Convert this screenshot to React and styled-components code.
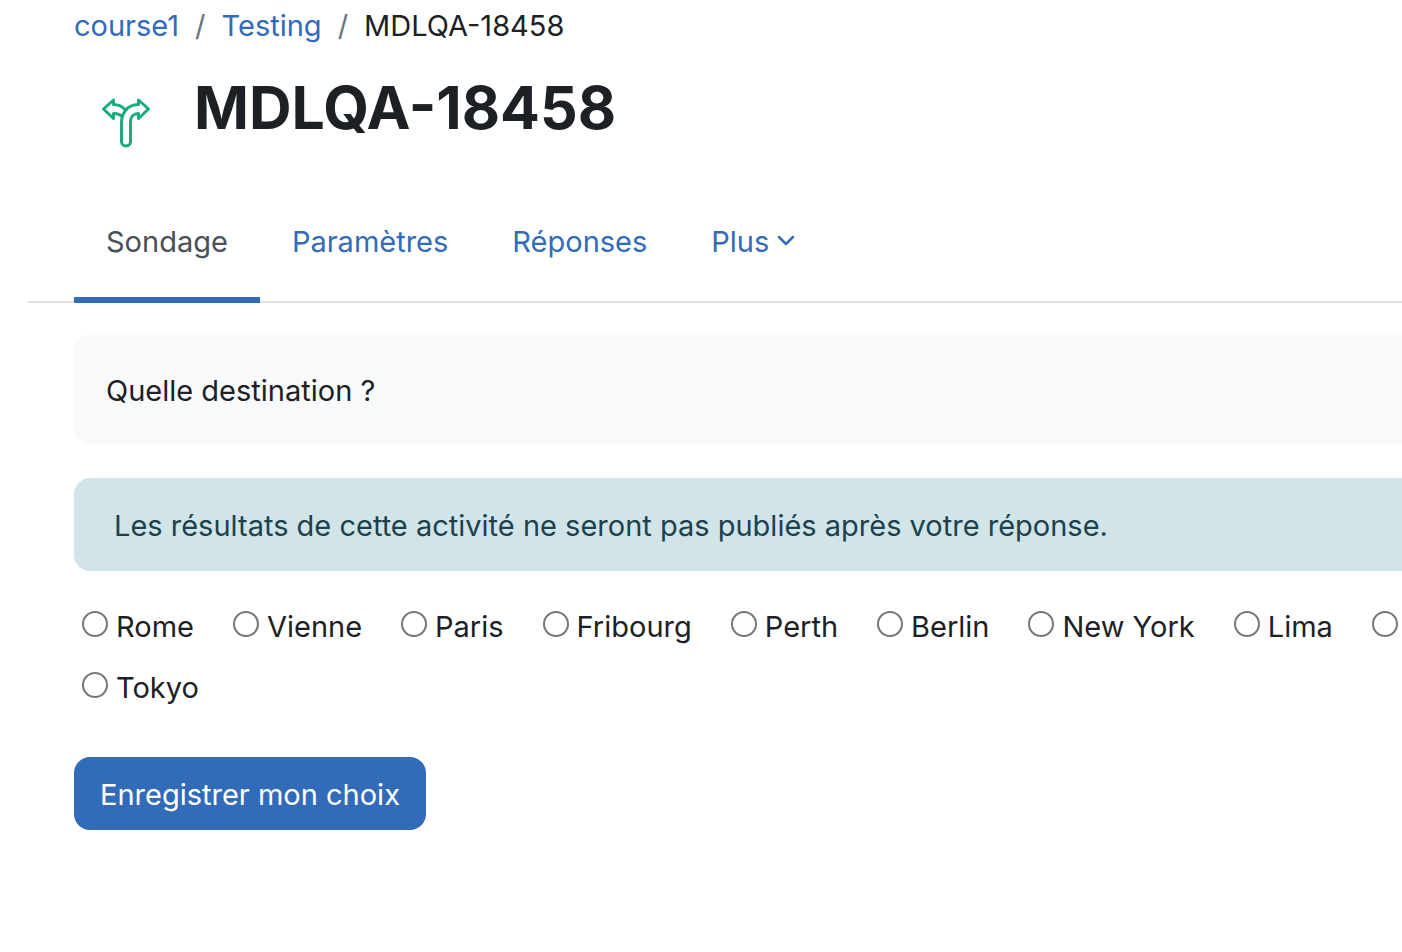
import { useState } from 'react'

import styled, { createGlobalStyle } from 'styled-components'

const tabs = ['Paramètres', 'Réponses']

const choiceRows = [
  ['Rome', 'Vienne', 'Paris', 'Fribourg', 'Perth', 'Berlin', 'New York', 'Lima', ''],
  ['Tokyo']
]

const ChoiceIcon = () => (
  <svg width="48" height="50" viewBox="0 0 48 50" fill="none" aria-hidden="true">
    <path
      d="M19.500 25V43.500a4.500 4.500 0 0 0 9 0V24c0-5 3-8.500 8-8.500V20.500L46.500 11 36.500 2V6.500C31 6.500 26.500 8.500 23.500 12.500C20.500 16 19.500 20 19.500 25Z"
      stroke="#1aab80"
      strokeWidth="3"
      strokeLinejoin="round"
    />
    <path
      d="M23.500 12C20.500 8.500 16.500 6.500 11.500 6.500V2L1.500 11 11.500 20.500V15.500C15.500 15.500 18.500 16.500 20.500 19"
      stroke="#1aab80"
      strokeWidth="3"
      strokeLinejoin="round"
    />
  </svg>
)

const App = () => {

  const [choice, setChoice] = useState(null)

  return (
    <Page>
      <GlobalStyle />
      <Breadcrumb aria-label="Breadcrumb">
        <a href="#course">course1</a>
        <span className="divider">/</span>
        <a href="#testing">Testing</a>
        <span className="divider">/</span>
        <span>MDLQA-18458</span>
      </Breadcrumb>
      <Header>
        <ChoiceIcon />
        <h1>MDLQA-18458</h1>
      </Header>
      <Tabs>
        <Tab href="#sondage" $active>Sondage</Tab>
        {tabs.map(tab => (
          <Tab key={tab} href={`#${tab}`}>{tab}</Tab>
        ))}
        <MoreButton type="button">
          Plus
          <svg width="18" height="12" viewBox="0 0 18 12" fill="none" aria-hidden="true">
            <path d="M2 2l7 7 7-7" stroke="currentColor" strokeWidth="2.500" strokeLinecap="round" strokeLinejoin="round" />
          </svg>
        </MoreButton>
      </Tabs>
      <Content>
        <Question>Quelle destination ?</Question>
        <Notice>Les résultats de cette activité ne seront pas publiés après votre réponse.</Notice>
        <form onSubmit={e => e.preventDefault()}>
          <Choices>
            {choiceRows.map((row, rowIndex) => (
              <ChoiceRow key={rowIndex}>
                {row.map((name, index) => {
                  const id = `choice-${rowIndex}-${index}`
                  return (
                    <Choice key={id} htmlFor={id}>
                      <input
                        type="radio"
                        name="answer"
                        id={id}
                        checked={choice === id}
                        onChange={() => setChoice(id)}
                      />
                      {name && <span>{name}</span>}
                    </Choice>
                  )
                })}
              </ChoiceRow>
            ))}
          </Choices>
          <SaveButton type="submit">Enregistrer mon choix</SaveButton>
        </form>
      </Content>
    </Page>
  )
}

export default App

const GlobalStyle = createGlobalStyle`
  *, *::before, *::after {
    box-sizing: border-box;
  }

  body {
    margin: 0;
    background: #fff;
    color: #1d2125;
    font-family: Inter, 'Liberation Sans', sans-serif;
    font-size: 29px;
    line-height: 45px;
    overflow-x: hidden;
  }

  a {
    color: #326bb8;
    text-decoration: none;
  }
`

const Page = styled.main`
  padding: 3px 0 40px 28px;
`

const Breadcrumb = styled.nav`
  display: flex;
  gap: 16px;
  padding-left: 46px;

  .divider {
    color: #6a737b;
  }
`

const Header = styled.header`
  display: flex;
  align-items: flex-start;
  gap: 44px;
  margin-top: 24px;
  padding-left: 74px;

  svg {
    flex: none;
    margin-top: 26px;
  }

  h1 {
    margin: 0;
    font-size: 59px;
    font-weight: 700;
    line-height: 72px;
  }
`

const Tabs = styled.nav`
  display: flex;
  height: 122px;
  margin-top: 33px;
  padding-left: 46px;
  border-bottom: 2px solid #dee2e6;
`

const Tab = styled.a`
  display: flex;
  align-items: center;
  height: 122px;
  padding: 4px 32px 0;
  border-bottom: 6px solid ${props => props.$active ? '#326bb8' : 'transparent'};
  color: ${props => props.$active ? '#495057' : '#326bb8'};
`

const MoreButton = styled.button`
  display: flex;
  align-items: center;
  gap: 8px;
  padding: 0 32px;
  border: none;
  background: none;
  color: #326bb8;
  font: inherit;
`

const Content = styled.section`
  padding: 32px 0 0 46px;
`

const Question = styled.div`
  padding: 33px 32px 31px;
  border-radius: 16px 0 0 16px;
  background: #f8f9fb;
`

const Notice = styled.div`
  margin-top: 34px;
  padding: 25px 40px 23px;
  border-radius: 16px 0 0 16px;
  background: #d1e4e7;
  color: #1b424e;
`

const Choices = styled.div`
  display: flex;
  flex-direction: column;
  gap: 16px;
  margin-top: 33px;
  padding-left: 8px;
`

const ChoiceRow = styled.div`
  display: flex;
  gap: 39px;
`

const Choice = styled.label`
  display: flex;
  align-items: center;
  gap: 8px;
  white-space: nowrap;

  input {
    appearance: none;
    flex: none;
    width: 26px;
    height: 26px;
    margin: 0 0 5px;
    border: 2px solid #767676;
    border-radius: 50%;
    background: #fff;
  }

  input:checked {
    border: 8px solid #326bb8;
  }
`

const SaveButton = styled.button`
  margin-top: 47px;
  padding: 15px 26px 13px;
  border: none;
  border-radius: 16px;
  background: #326bb8;
  color: #fff;
  font: inherit;
`
